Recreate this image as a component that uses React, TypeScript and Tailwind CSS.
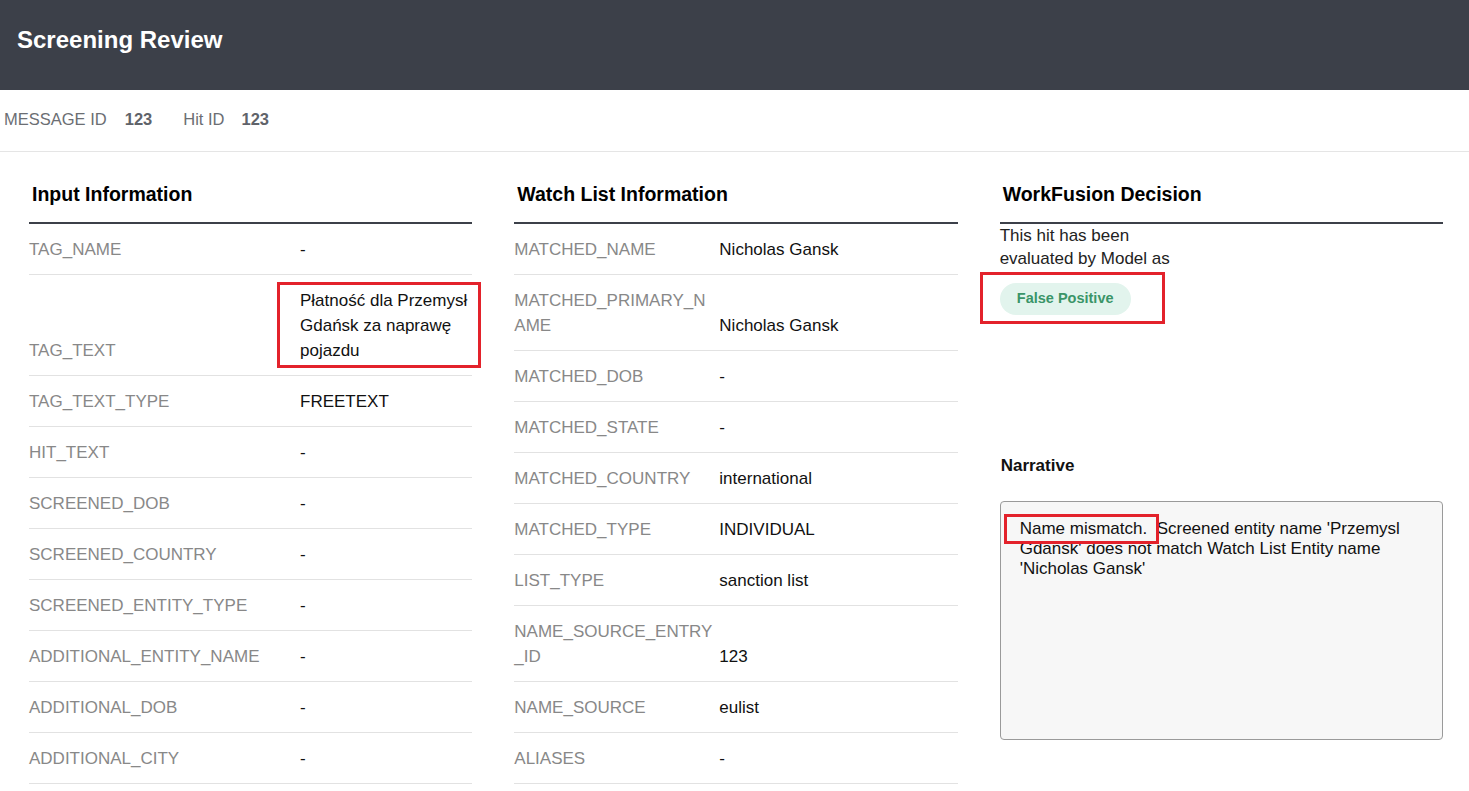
import type { ReactNode } from "react";

type Row = { label: string; value: ReactNode; highlight?: boolean };

const inputRows: Row[] = [
  { label: "TAG_NAME", value: "-" },
  { label: "TAG_TEXT", value: "Płatność dla Przemysł Gdańsk za naprawę pojazdu", highlight: true },
  { label: "TAG_TEXT_TYPE", value: "FREETEXT" },
  { label: "HIT_TEXT", value: "-" },
  { label: "SCREENED_DOB", value: "-" },
  { label: "SCREENED_COUNTRY", value: "-" },
  { label: "SCREENED_ENTITY_TYPE", value: "-" },
  { label: "ADDITIONAL_ENTITY_NAME", value: "-" },
  { label: "ADDITIONAL_DOB", value: "-" },
  { label: "ADDITIONAL_CITY", value: "-" },
];

const watchRows: Row[] = [
  { label: "MATCHED_NAME", value: "Nicholas Gansk" },
  { label: "MATCHED_PRIMARY_NAME", value: "Nicholas Gansk" },
  { label: "MATCHED_DOB", value: "-" },
  { label: "MATCHED_STATE", value: "-" },
  { label: "MATCHED_COUNTRY", value: "international" },
  { label: "MATCHED_TYPE", value: "INDIVIDUAL" },
  { label: "LIST_TYPE", value: "sanction list" },
  { label: "NAME_SOURCE_ENTRY_ID", value: "123" },
  { label: "NAME_SOURCE", value: "eulist" },
  { label: "ALIASES", value: "-" },
];

function SectionTitle({ children }: { children: ReactNode }) {
  return (
    <h2 className="pl-[3px] pb-[14px] text-[19.5px] leading-[28px] font-bold text-black border-b-2 border-[#3c4049]">
      {children}
    </h2>
  );
}

function InfoTable({ rows, labelClass }: { rows: Row[]; labelClass: string }) {
  return (
    <div>
      {rows.map((r) => (
        <div
          key={r.label}
          className="relative flex items-end border-b border-[#e2e2e2] pt-[13px] pb-[12px] text-[17px] leading-[25px]"
        >
          <div className={`${labelClass} shrink-0 break-all text-[#888888]`}>{r.label}</div>
          <div className="flex-1 min-w-0 text-[#111111]">{r.value}</div>
          {/* red annotation from the review screenshot */}
          {r.highlight && (
            <div className="absolute left-[248px] right-[-9px] top-[7px] bottom-[7px] border-[3px] border-[#e3222b] pointer-events-none" />
          )}
        </div>
      ))}
    </div>
  );
}

export default function App() {
  return (
    <div className="min-h-screen bg-white" style={{ fontFamily: '"Liberation Sans", Arial, sans-serif' }}>
      <header className="h-[90px] bg-[#3c4049] px-[17px] pt-[25px]">
        <h1 className="text-[24px] leading-[30px] font-bold text-white">Screening Review</h1>
      </header>

      <div className="h-[62px] border-b border-[#e5e5e5] pl-[4px] pt-[17px] flex text-[16.5px] leading-[24px]">
        <span className="text-[#6b6e73]">MESSAGE ID</span>
        <span className="ml-[18px] font-bold text-[#5f636a]">123</span>
        <span className="ml-[31px] text-[#6b6e73]">Hit ID</span>
        <span className="ml-[17px] font-bold text-[#5f636a]">123</span>
      </div>

      <main className="grid grid-cols-3 gap-[42px] pl-[29px] pr-[26px] pt-[28px]">
        <section>
          <SectionTitle>Input Information</SectionTitle>
          <InfoTable rows={inputRows} labelClass="w-[271px]" />
        </section>

        <section>
          <SectionTitle>Watch List Information</SectionTitle>
          <InfoTable rows={watchRows} labelClass="w-[205px] pr-[4px]" />
        </section>

        <section>
          <SectionTitle>WorkFusion Decision</SectionTitle>
          <p className="w-[180px] text-[17px] leading-[23px] text-[#222222]">
            This hit has been evaluated by Model as
          </p>
          <div className="relative mt-[13px] inline-block">
            <span className="inline-flex h-[32px] w-[131px] items-center justify-center rounded-full bg-[#e2f4ed] text-[14.5px] font-bold text-[#3a9568]">
              False Positive
            </span>
            <div className="absolute left-[-20px] right-[-34px] top-[-11px] bottom-[-9px] border-[3px] border-[#e3222b] pointer-events-none" />
          </div>

          <h3 className="mt-[139px] pl-px text-[17px] leading-[24px] font-bold text-[#111111]">Narrative</h3>
          <div className="mt-[23px] h-[239px] rounded-[4px] border border-[#9a9a9a] bg-[#f7f7f7] pl-[19px] pr-[18px] pt-[17px] text-[17px] leading-[20px] text-[#111111]">
            <span className="relative">
              Name mismatch.
              <span className="absolute left-[-16px] right-[-12px] top-[-5px] bottom-[-6px] border-[3px] border-[#e3222b] pointer-events-none" />
            </span>
            {"\u00a0 "}Screened entity name 'Przemysl Gdansk' does not match Watch List Entity name 'Nicholas Gansk'
          </div>
        </section>
      </main>
    </div>
  );
}
